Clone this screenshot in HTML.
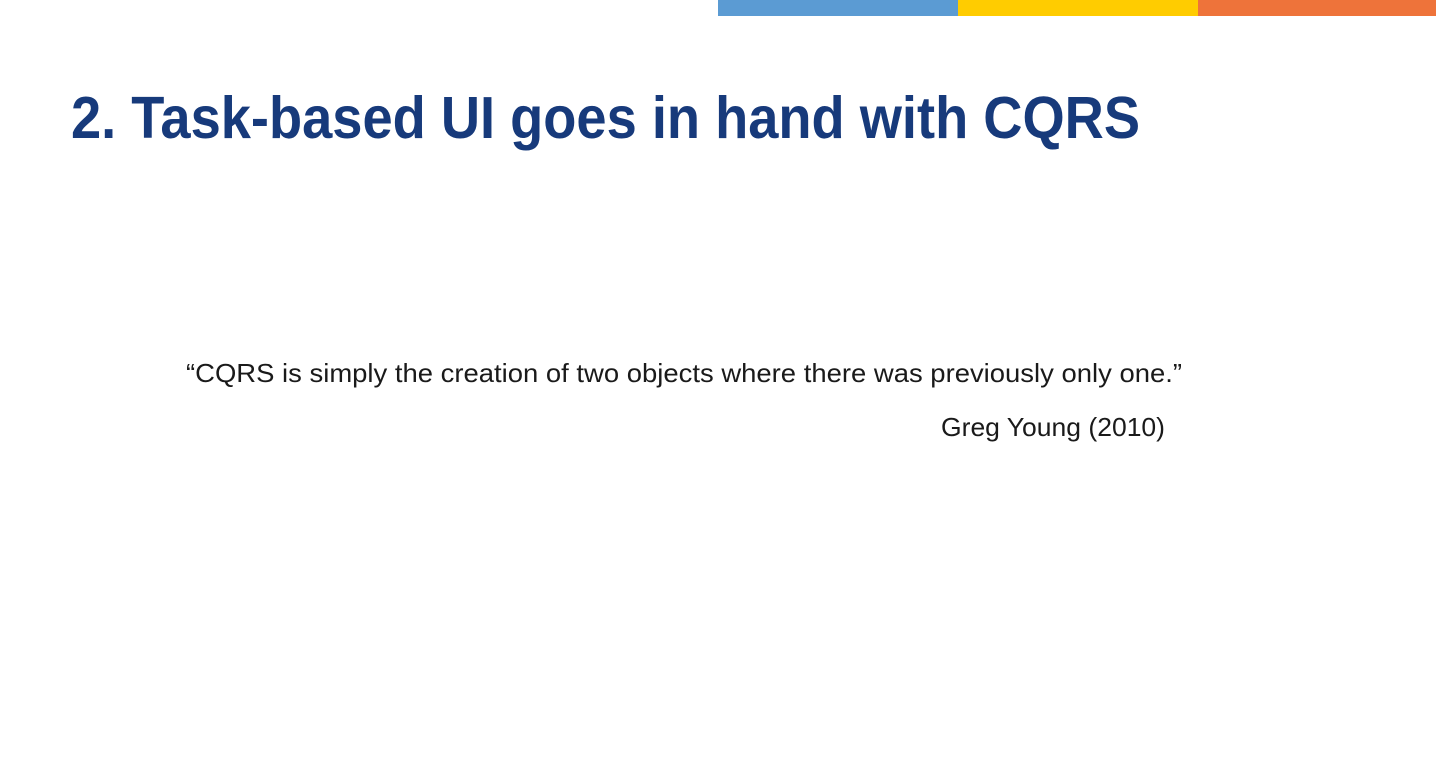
<!DOCTYPE html>
<html><head><meta charset="utf-8"><style>
html,body{margin:0;padding:0;background:#fff;width:1436px;height:778px;overflow:hidden}
.bar{position:absolute;top:0;height:16px}
svg{position:absolute;left:0;top:0}
</style></head><body>
<div class="bar" style="left:718px;width:240px;background:#5B9BD3"></div>
<div class="bar" style="left:958px;width:240px;background:#FFCC00"></div>
<div class="bar" style="left:1198px;width:238px;background:#EE733A"></div>
<svg width="1436" height="778">
<text x="71" y="138" font-family="Liberation Sans, sans-serif" font-weight="bold" font-size="59" fill="#173A7B" textLength="1069" lengthAdjust="spacingAndGlyphs">2. Task-based UI goes in hand with CQRS</text>
<text x="186" y="382" font-family="Liberation Sans, sans-serif" font-size="26" fill="#1a1a1a" textLength="996" lengthAdjust="spacingAndGlyphs">“CQRS is simply the creation of two objects where there was previously only one.”</text>
<text x="941" y="436" font-family="Liberation Sans, sans-serif" font-size="26" fill="#1a1a1a" textLength="224" lengthAdjust="spacingAndGlyphs">Greg Young (2010)</text>
</svg>
</body></html>
